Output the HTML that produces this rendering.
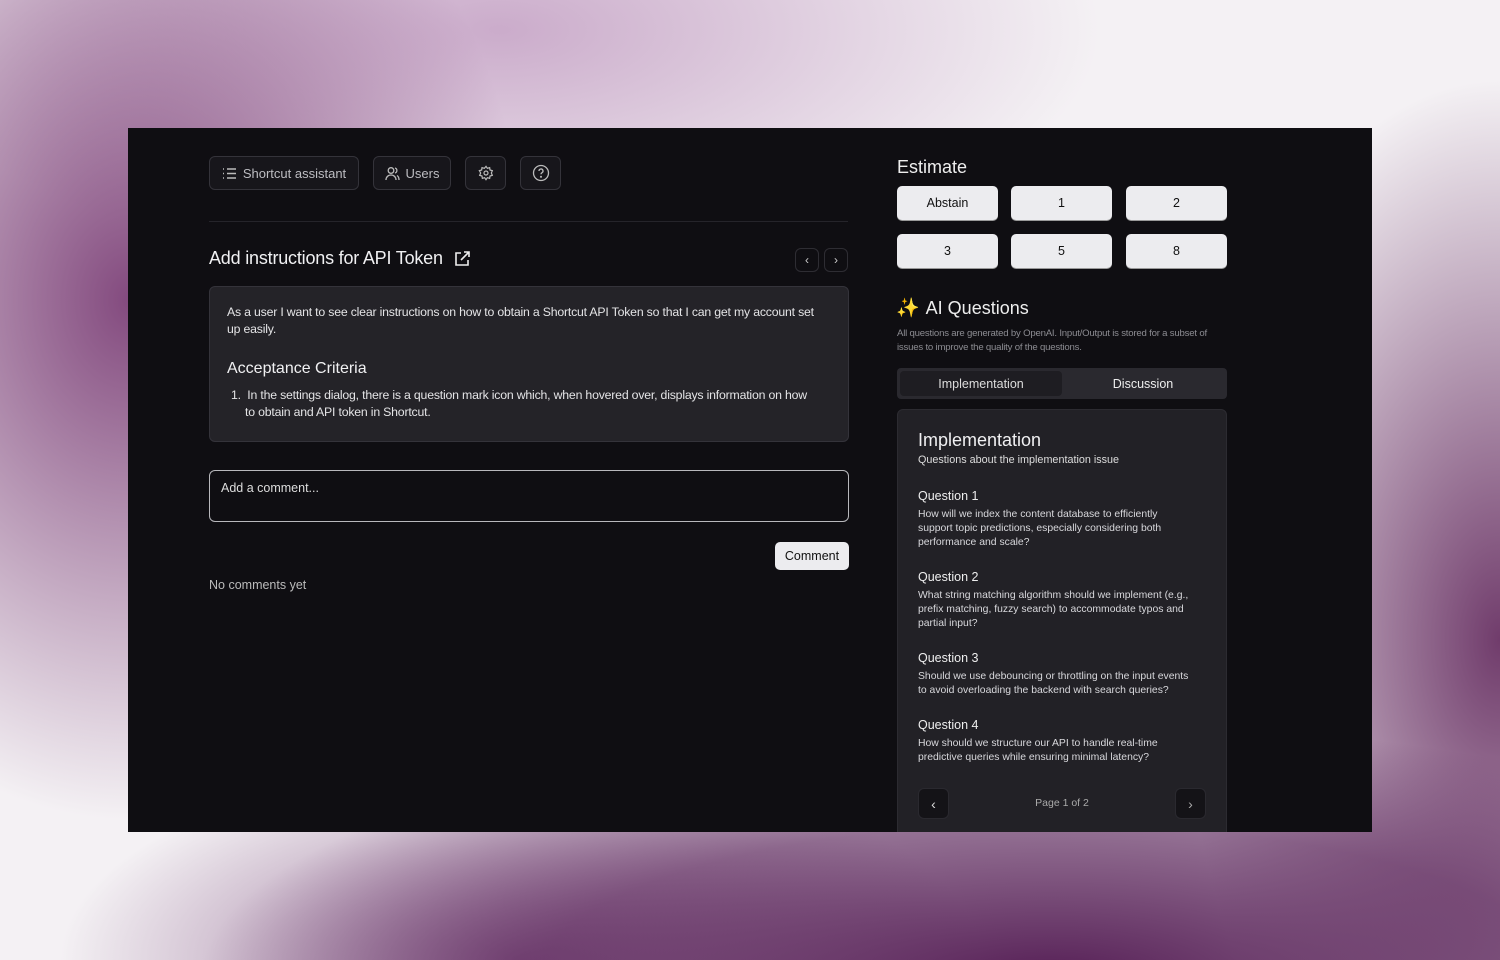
<!DOCTYPE html>
<html><head><meta charset="utf-8"><style>
*{box-sizing:border-box;margin:0;padding:0}
body{width:1500px;height:960px;overflow:hidden;font-family:"Liberation Sans",sans-serif;position:relative;
background:
radial-gradient(ellipse 400px 520px at 130px 300px,rgba(125,65,120,0.95),rgba(125,65,120,0) 100%),
radial-gradient(ellipse 850px 260px at 1050px 980px,rgba(85,30,85,1),rgba(85,30,85,0.6) 60%,rgba(85,30,85,0) 100%),
radial-gradient(ellipse 320px 560px at 1500px 640px,rgba(105,50,100,0.95),rgba(105,50,100,0) 100%),
radial-gradient(ellipse 460px 200px at 520px 960px,rgba(120,70,120,0.8),rgba(120,70,120,0) 100%),
radial-gradient(ellipse 600px 250px at 500px 30px,rgba(175,125,175,0.6),rgba(175,125,175,0) 100%),
#f4f1f4;}
.app{position:absolute;left:128px;top:128px;width:1244px;height:704px;background:#0f0e12;overflow:hidden;color:#e8e8ea}
.btn{position:absolute;top:28px;height:34px;border:1px solid #34333a;border-radius:6px;background:#17161b;color:#bdbdc2;font-size:13px;display:flex;align-items:center;justify-content:center;gap:6px}
.abs{position:absolute}
.est{position:absolute;width:101px;height:34px;background:#ececef;border-radius:5px;color:#111;font-size:12.5px;display:flex;align-items:center;justify-content:center;box-shadow:0 1px 0 #999}
.sq{position:absolute;width:24px;height:24px;border:1px solid #2e2d33;border-radius:6px;color:#ccc;font-size:12px;display:flex;align-items:center;justify-content:center}
.q h4{font-size:12.5px;font-weight:normal;color:#eee;height:19px}
.q p{font-size:10.4px;line-height:14px;color:#d8d8dc;width:272px}
.q{margin-bottom:20px}
</style></head><body>
<div class="app">
 <div class="btn" style="left:81px;width:150px"><svg width="15" height="13" viewBox="0 0 15 13" fill="none" stroke="#bbb" stroke-width="1.4"><path d="M1 2h1M1 6.5h1M1 11h1M5 2h9M5 6.5h9M5 11h9"/></svg>Shortcut assistant</div>
 <div class="btn" style="left:245px;width:78px"><svg width="15" height="15" viewBox="0 0 15 15" fill="none" stroke="#bbb" stroke-width="1.3"><circle cx="6" cy="4.5" r="2.8"/><path d="M1 14c0-3 2.2-5 5-5s5 2 5 5M10 2a2.6 2.6 0 010 5M12 9.5c1.3.8 2 2.3 2 4.5"/></svg>Users</div>
 <div class="btn" style="left:337px;width:41px"><svg width="16" height="16" viewBox="0 0 24 24" fill="none" stroke="#bbb" stroke-width="1.8"><circle cx="12" cy="12" r="3"/><path d="M12 2l2 3 3.5-1 .5 3.5 3.5 1-1.5 3.5 1.5 3.5-3.5 1-.5 3.5-3.5-1-2 3-2-3-3.5 1-.5-3.5-3.5-1 1.5-3.5L2 8.5l3.5-1L6 4l3.5 1z"/></svg></div>
 <div class="btn" style="left:392px;width:41px"><svg width="18" height="18" viewBox="0 0 18 18" fill="none" stroke="#bbb" stroke-width="1.3"><circle cx="9" cy="9" r="7.5"/><path d="M7 7a2 2 0 113 1.7c-.7.4-1 .8-1 1.6"/><circle cx="9" cy="12.8" r=".4" fill="#bbb"/></svg></div>
 <div class="abs" style="left:81px;top:93px;width:639px;height:1px;background:#25242a"></div>
 <div class="abs" style="left:81px;top:120px;font-size:18px;color:#f0f0f2;display:flex;align-items:center;gap:10px;letter-spacing:-0.2px">Add instructions for API Token <svg width="18" height="18" viewBox="0 0 18 18" fill="none" stroke="#eee" stroke-width="1.6"><path d="M8 3H3v12h12v-5M11 2h5v5M16 2L8 10"/></svg></div>
 <div class="sq" style="left:667px;top:120px">‹</div><div class="sq" style="left:696px;top:120px">›</div>
 <div class="abs" style="left:81px;top:158px;width:640px;height:156px;background:#242328;border:1px solid #34333a;border-radius:6px;padding:17px 17px">
  <div style="font-size:12.3px;line-height:17px;color:#e4e4e6;letter-spacing:-0.2px;padding-right:12px">As a user I want to see clear instructions on how to obtain a Shortcut API Token so that I can get my account set up easily.</div>
  <div style="font-size:16px;margin-top:22px;color:#f0f0f2">Acceptance Criteria</div>
  <div style="font-size:12.3px;line-height:17px;color:#e4e4e6;margin-top:9px;padding-left:18px;text-indent:-14px;letter-spacing:-0.2px;padding-right:20px">1.&nbsp; In the settings dialog, there is a question mark icon which, when hovered over, displays information on how to obtain and API token in Shortcut.</div>
 </div>
 <div class="abs" style="left:81px;top:342px;width:640px;height:52px;border:1px solid #b8b8bc;border-radius:6px;padding:10px 11px;font-size:12.5px;color:#ddd">Add a comment...</div>
 <div class="abs" style="left:647px;top:414px;width:74px;height:28px;background:#ececef;border-radius:5px;color:#111;font-size:12.5px;display:flex;align-items:center;justify-content:center">Comment</div>
 <div class="abs" style="left:81px;top:450px;font-size:12.5px;color:#bbb">No comments yet</div>

 <div class="abs" style="left:769px;top:29px;font-size:18px;color:#eee">Estimate</div>
 <div class="est" style="left:769px;top:58px">Abstain</div><div class="est" style="left:883px;top:58px">1</div><div class="est" style="left:998px;top:58px">2</div>
 <div class="est" style="left:769px;top:106px">3</div><div class="est" style="left:883px;top:106px">5</div><div class="est" style="left:998px;top:106px">8</div>
 <div class="abs" style="left:768px;top:168px;font-size:18px;color:#eee;display:flex;align-items:center;gap:6px"><span style="color:#f5c543;font-size:19px">✨</span>AI Questions</div>
 <div class="abs" style="left:769px;top:199px;width:310px;font-size:9.6px;line-height:14px;color:#8c8c92;letter-spacing:-0.2px">All questions are generated by OpenAI. Input/Output is stored for a subset of issues to improve the quality of the questions.</div>
 <div class="abs" style="left:769px;top:240px;width:330px;height:31px;background:#2a292f;border-radius:4px">
  <div class="abs" style="left:3px;top:3px;width:162px;height:25px;background:#1e1d22;border-radius:4px;font-size:12.5px;color:#ddd;display:flex;align-items:center;justify-content:center">Implementation</div>
  <div class="abs" style="left:165px;top:3px;width:162px;height:25px;font-size:12.5px;color:#eee;display:flex;align-items:center;justify-content:center">Discussion</div>
 </div>
 <div class="abs" style="left:769px;top:281px;width:330px;height:440px;background:#222126;border:1px solid #2c2b31;border-radius:6px;padding:20px 20px">
  <div style="font-size:18px;color:#f0f0f2">Implementation</div>
  <div style="font-size:10.8px;color:#ddd;margin-top:3px;margin-bottom:23px">Questions about the implementation issue</div>
  <div class="q"><h4>Question 1</h4><p>How will we index the content database to efficiently support topic predictions, especially considering both performance and scale?</p></div>
  <div class="q"><h4>Question 2</h4><p>What string matching algorithm should we implement (e.g., prefix matching, fuzzy search) to accommodate typos and partial input?</p></div>
  <div class="q"><h4>Question 3</h4><p>Should we use debouncing or throttling on the input events to avoid overloading the backend with search queries?</p></div>
  <div class="q"><h4>Question 4</h4><p>How should we structure our API to handle real-time predictive queries while ensuring minimal latency?</p></div>
  <div class="abs" style="left:20px;top:378px;width:31px;height:31px;background:#141317;border:1px solid #2a292f;border-radius:6px;color:#ddd;display:flex;align-items:center;justify-content:center;font-size:14px">‹</div>
  <div class="abs" style="left:0;width:328px;top:387px;text-align:center;font-size:10.5px;color:#aaa">Page 1 of 2</div>
  <div class="abs" style="left:277px;top:378px;width:31px;height:31px;background:#141317;border:1px solid #2a292f;border-radius:6px;color:#aaa;display:flex;align-items:center;justify-content:center;font-size:14px">›</div>
 </div>
</div>
</body></html>
